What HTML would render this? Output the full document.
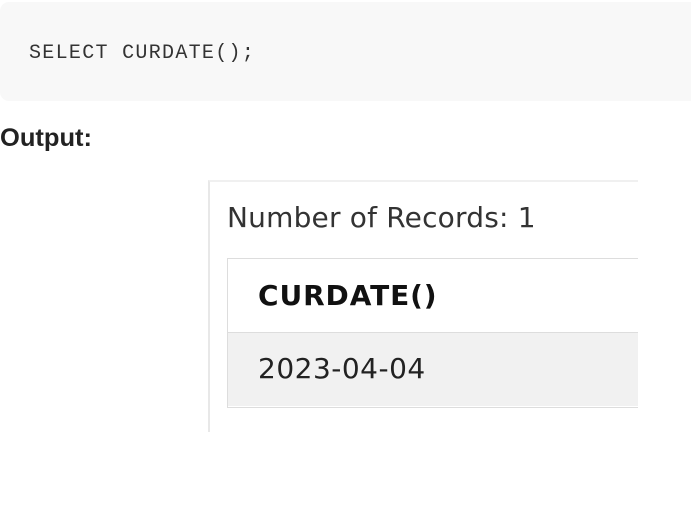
<!DOCTYPE html>
<html><head><style>
body{margin:0;width:691px;height:506px;background:#fff;position:relative;overflow:hidden;font-family:"Liberation Sans",sans-serif}
.code{position:absolute;left:0;top:2px;width:699px;height:99px;background:#f8f8f8;border-radius:9px}
.code span{position:absolute;left:29px;top:40px;font:20px/24px "Liberation Mono","DejaVu Sans Mono",monospace;letter-spacing:1.3px;color:#333}
.out{position:absolute;left:0;top:124px;font:bold 25px/28px "Liberation Sans",sans-serif;color:#222;transform:scaleX(1.02);transform-origin:left}
.frame{position:absolute;left:208px;top:180px;width:428px;height:250px;border-left:2px solid #e8e8e8;border-top:2px solid #f0f0f0;overflow:hidden}
.num{position:absolute;left:17px;top:18px;font:28px/36px "DejaVu Sans",sans-serif;color:#333;letter-spacing:0.2px;white-space:nowrap}
.tbl{position:absolute;left:17px;top:76px;width:440px;height:148px;border:1px solid #ddd;border-right:none}
.h{position:absolute;left:0;top:0;width:100%;height:73px;border-bottom:1px solid #ddd;background:#fff}
.h span{position:absolute;left:30px;top:19px;font:bold 28px/36px "DejaVu Sans",sans-serif;color:#111;letter-spacing:0.9px;white-space:nowrap}
.d{position:absolute;left:0;top:74px;width:100%;height:73px;background:#f1f1f1}
.d span{position:absolute;left:30px;top:18px;font:28px/36px "DejaVu Sans",sans-serif;color:#222;letter-spacing:0.5px;white-space:nowrap}
</style></head><body>
<div class="code"><span>SELECT CURDATE();</span></div>
<div class="out">Output:</div>
<div class="frame">
<div class="num">Number of Records: 1</div>
<div class="tbl"><div class="h"><span>CURDATE()</span></div><div class="d"><span>2023-04-04</span></div></div>
</div>
</body></html>
